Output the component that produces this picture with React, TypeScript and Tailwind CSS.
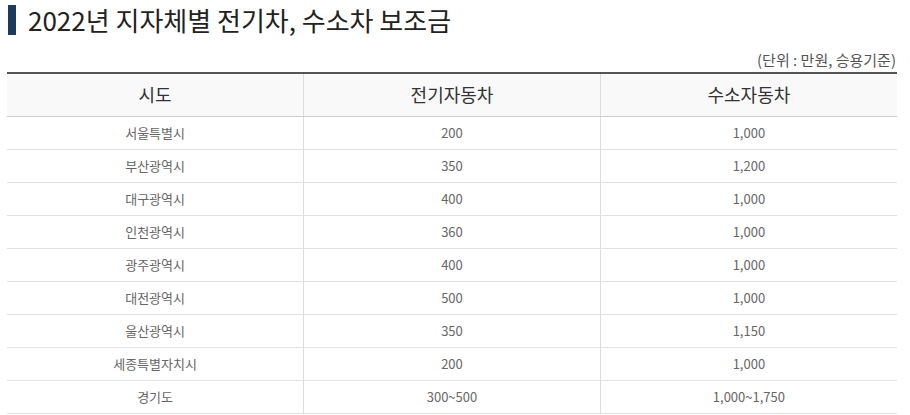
import React from "react";

const rows: [string, string, string][] = [
  ["서울특별시", "200", "1,000"],
  ["부산광역시", "350", "1,200"],
  ["대구광역시", "400", "1,000"],
  ["인천광역시", "360", "1,000"],
  ["광주광역시", "400", "1,000"],
  ["대전광역시", "500", "1,000"],
  ["울산광역시", "350", "1,150"],
  ["세종특별자치시", "200", "1,000"],
  ["경기도", "300~500", "1,000~1,750"],
];

export default function App() {
  return (
    <div
      className="w-[910px] h-[415px] bg-white overflow-hidden pl-[7px] pr-[13px]"
      style={{ fontFamily: '"Noto Sans CJK KR", "Noto Sans", sans-serif' }}
    >
      <div className="flex items-center h-[40px]">
        <div className="ml-[1px] w-[8px] h-[30px] bg-[#1b3a5c]" />
        <h1 className="ml-[12px] text-[26px] leading-[30px] text-[#222] font-normal">
          2022년 지자체별 전기차, 수소차 보조금
        </h1>
      </div>
      <div className="h-[32px] flex items-end justify-end pb-[2px] pr-[1px] text-[15px] leading-[20px] text-[#555]">
        (단위 : 만원, 승용기준)
      </div>
      <table className="w-full border-collapse table-fixed border-t-2 border-[#555]">
        <thead>
          <tr className="bg-[#f9f9f9]">
            <th className="h-[43px] font-normal text-[18px] text-[#333] border-b border-[#ccc] border-r border-r-[#ddd]">시도</th>
            <th className="h-[43px] font-normal text-[18px] text-[#333] border-b border-[#ccc] border-r border-r-[#ddd]">전기자동차</th>
            <th className="h-[43px] font-normal text-[18px] text-[#333] border-b border-[#ccc]">수소자동차</th>
          </tr>
        </thead>
        <tbody>
          {rows.map((r) => (
            <tr key={r[0]}>
              <td className="h-[33px] text-center text-[13px] text-[#666] border-b border-[#e2e2e2] border-r border-r-[#ddd]">{r[0]}</td>
              <td className="h-[33px] text-center text-[13px] text-[#666] border-b border-[#e2e2e2] border-r border-r-[#ddd]">{r[1]}</td>
              <td className="h-[33px] text-center text-[13px] text-[#666] border-b border-[#e2e2e2]">{r[2]}</td>
            </tr>
          ))}
        </tbody>
      </table>
    </div>
  );
}
